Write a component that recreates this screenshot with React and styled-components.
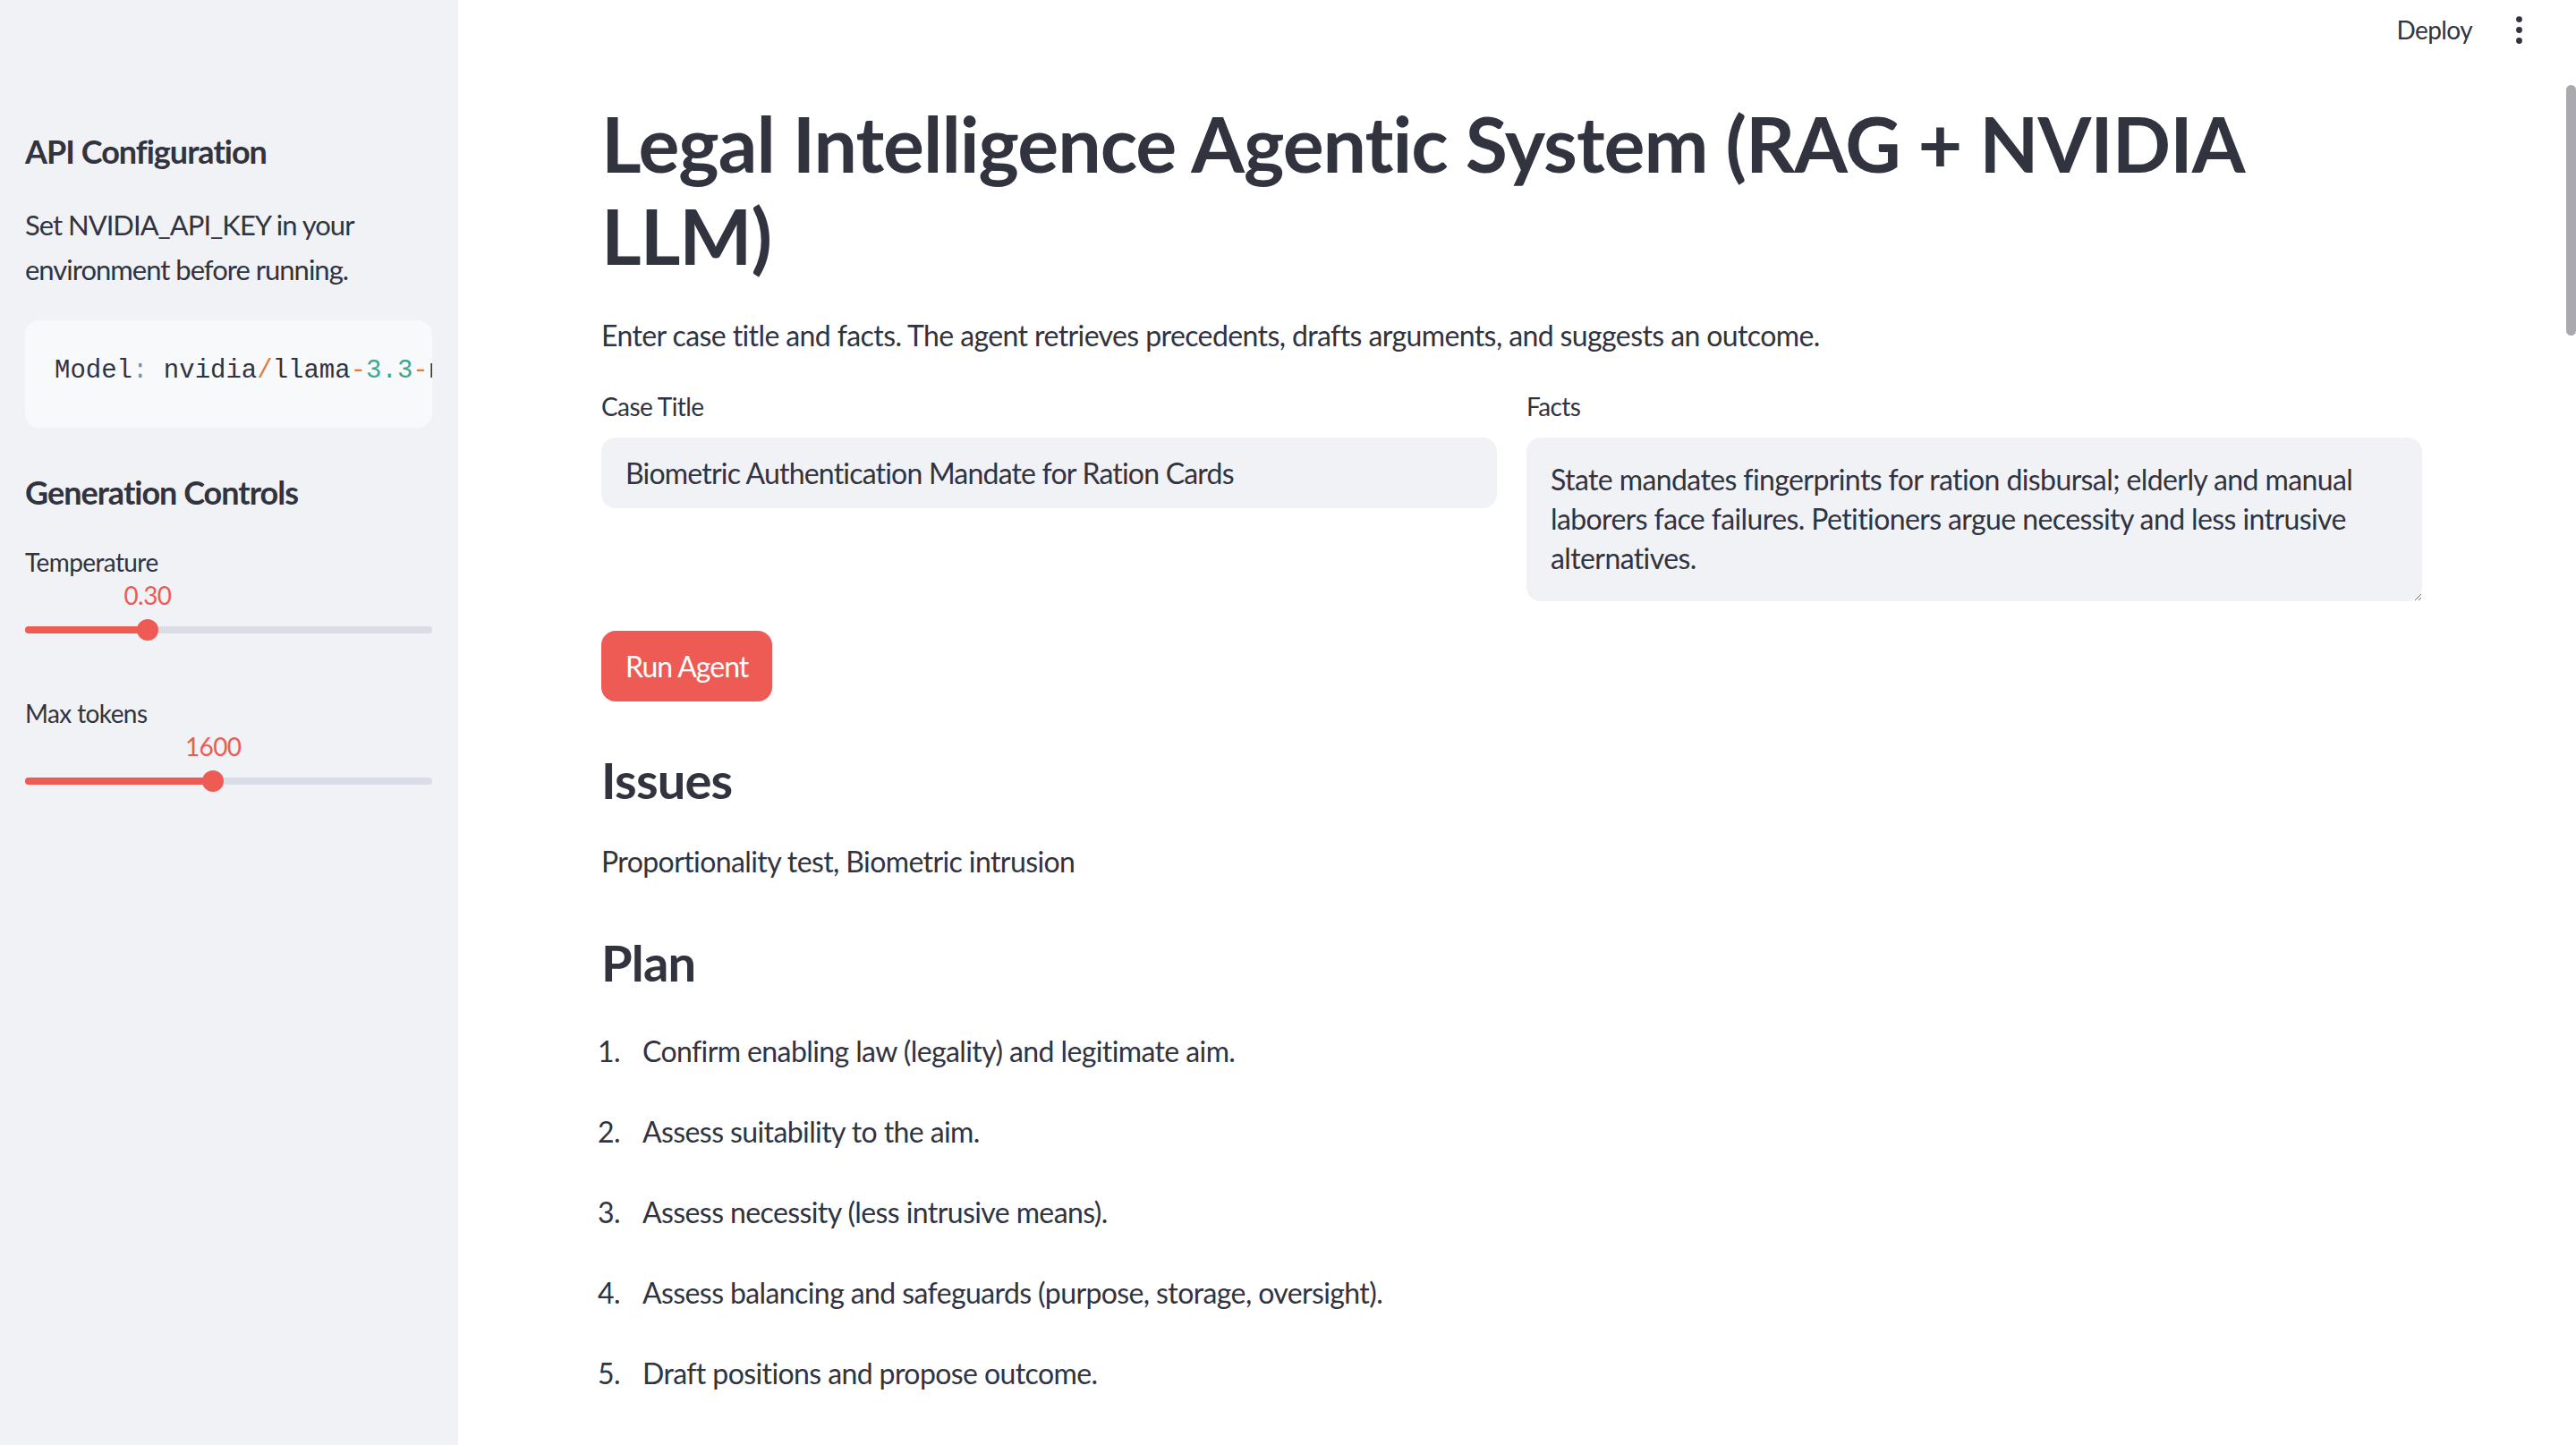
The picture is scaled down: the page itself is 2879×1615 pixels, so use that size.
import styled, { createGlobalStyle } from "styled-components";
import { EllipsisVertical } from "lucide-react";

const TEXT = "#31333f";
const RED = "#ee5b55";
const FONT = `Lato, "Noto Sans", sans-serif`;

const GlobalStyle = createGlobalStyle`
  html, body {
    margin: 0;
    padding: 0;
    height: 100%;
    overflow: hidden;
    background: #ffffff;
  }
  body {
    font-family: ${FONT};
    color: ${TEXT};
    letter-spacing: -0.6px;
  }
  * {
    box-sizing: border-box;
  }
`;

const Layout = styled.div`
  display: grid;
  grid-template-columns: 512px 1fr;
  height: 100vh;
`;

/* ---------- sidebar ---------- */

const Sidebar = styled.aside`
  background: #f0f2f6;
  padding: 145px 29px 0 28px;
  display: flex;
  flex-direction: column;
`;

const SideHeading = styled.h2`
  margin: ${(p) => p.$top || 0}px 0 0;
  font-size: 36px;
  line-height: 48px;
  font-weight: 700;
  letter-spacing: -1px;
`;

const SideText = styled.p`
  margin: 33px 0 0;
  font-size: 31px;
  line-height: 50px;
  letter-spacing: -1px;
`;

const CodeBlock = styled.pre`
  margin: 32px 0 0;
  height: 120px;
  background: #f8f9fb;
  border-radius: 16px;
  padding: 36px 0 0 33px;
  font-family: "Liberation Mono", monospace;
  font-size: 29px;
  line-height: 42px;
  letter-spacing: 0;
  white-space: pre;
  overflow: hidden;
  color: ${TEXT};
`;

const Tok = styled.span`
  color: ${(p) =>
    p.$kind === "op" ? "#e07b39" : p.$kind === "num" ? "#3fa68f" : p.$kind === "punct" ? "#8a8d96" : TEXT};
`;

const SliderLabel = styled.div`
  margin-top: ${(p) => p.$top}px;
  font-size: 28px;
  line-height: 36px;
`;

const SliderWrap = styled.div`
  position: relative;
  margin-top: 5px;
  height: 66px;
`;

const SliderValue = styled.span`
  position: absolute;
  top: 0;
  transform: translateX(-50%);
  font-size: 28px;
  line-height: 28px;
  color: ${RED};
`;

const Track = styled.div`
  position: absolute;
  left: 0;
  right: 0;
  top: 49px;
  height: 8px;
  border-radius: 4px;
  background: #dadde5;
`;

const Fill = styled.div`
  height: 100%;
  border-radius: 4px;
  background: ${RED};
`;

const Thumb = styled.div`
  position: absolute;
  top: 41px;
  width: 24px;
  height: 24px;
  margin-left: -12px;
  border-radius: 50%;
  background: ${RED};
`;

function Slider({ label, value, pct, top }) {
  return (
    <>
      <SliderLabel $top={top}>{label}</SliderLabel>
      <SliderWrap>
        <SliderValue style={{ left: `${pct}%` }}>{value}</SliderValue>
        <Track>
          <Fill style={{ width: `${pct}%` }} />
        </Track>
        <Thumb style={{ left: `${pct}%` }} />
      </SliderWrap>
    </>
  );
}

/* ---------- main ---------- */

const Main = styled.main`
  position: relative;
  overflow: hidden;
`;

const Header = styled.header`
  height: 66px;
  display: flex;
  align-items: center;
  justify-content: flex-end;
  gap: 32px;
  padding-right: 43px;
`;

const DeployLabel = styled.span`
  font-size: 28px;
  line-height: 28px;
`;

const ScrollThumb = styled.div`
  position: absolute;
  right: 0;
  top: 95px;
  width: 11px;
  height: 280px;
  border-radius: 6px;
  background: #a9a9ae;
`;

const Content = styled.div`
  padding: 0 172px 0 160px;
`;

const Title = styled.h1`
  margin: 42px 0 0;
  font-size: 86px;
  line-height: 103px;
  font-weight: 700;
  letter-spacing: -1px;
`;

const Paragraph = styled.p`
  margin: ${(p) => p.$top}px 0 0;
  font-size: 32px;
  line-height: 51px;
`;

const FieldRow = styled.div`
  display: grid;
  grid-template-columns: 1fr 1fr;
  gap: 33px;
  margin-top: 36px;
  align-items: start;
`;

const Field = styled.div`
  display: flex;
  flex-direction: column;
`;

const FieldLabel = styled.label`
  font-size: 28px;
  line-height: 36px;
  margin-bottom: 17px;
`;

const TextInput = styled.input`
  height: 79px;
  border: none;
  border-radius: 16px;
  background: #f0f2f6;
  padding: 0 27px;
  font-family: ${FONT};
  font-size: 32px;
  letter-spacing: -0.8px;
  color: ${TEXT};
  outline: none;
`;

const TextArea = styled.textarea`
  height: 183px;
  border: none;
  border-radius: 16px;
  background: #f0f2f6;
  padding: 25px 27px;
  font-family: ${FONT};
  font-size: 32px;
  line-height: 44px;
  letter-spacing: -0.6px;
  color: ${TEXT};
  outline: none;
  resize: vertical;
`;

const RunButton = styled.button`
  align-self: flex-start;
  margin-top: 33px;
  height: 79px;
  padding: 0 27px;
  border: none;
  border-radius: 16px;
  background: ${RED};
  color: #ffffff;
  font-family: ${FONT};
  font-size: 32px;
  letter-spacing: -1px;
  cursor: pointer;
`;

const SectionTitle = styled.h3`
  margin: ${(p) => p.$top}px 0 0;
  font-size: 56px;
  line-height: 67px;
  font-weight: 700;
  letter-spacing: -0.8px;
`;

const Steps = styled.ol`
  list-style: none;
  margin: 40px 0 0 -4px;
  padding: 0;
`;

const Step = styled.li`
  display: flex;
  font-size: 32px;
  line-height: 51px;
  margin-bottom: 39px;
`;

const StepNum = styled.span`
  width: 50px;
  flex: none;
`;

const steps = [
  "Confirm enabling law (legality) and legitimate aim.",
  "Assess suitability to the aim.",
  "Assess necessity (less intrusive means).",
  "Assess balancing and safeguards (purpose, storage, oversight).",
  "Draft positions and propose outcome.",
];

export default function App() {
  return (
    <>
      <GlobalStyle />
      <Layout>
        <Sidebar>
          <SideHeading>API Configuration</SideHeading>
          <SideText>
            Set NVIDIA_API_KEY in your environment before running.
          </SideText>
          <CodeBlock>
            <Tok>Model</Tok>
            <Tok $kind="punct">:</Tok> <Tok>nvidia</Tok>
            <Tok $kind="op">/</Tok>
            <Tok>llama</Tok>
            <Tok $kind="op">-</Tok>
            <Tok $kind="num">3.3</Tok>
            <Tok $kind="op">-</Tok>
            <Tok>nemotron</Tok>
            <Tok $kind="op">-</Tok>
            <Tok>super</Tok>
          </CodeBlock>
          <SideHeading $top={48}>Generation Controls</SideHeading>
          <Slider label="Temperature" value="0.30" pct={30.1} top={36} />
          <Slider label="Max tokens" value="1600" pct={46.2} top={62} />
        </Sidebar>

        <Main>
          <Header>
            <DeployLabel>Deploy</DeployLabel>
            <EllipsisVertical size={41} strokeWidth={2} color={TEXT} />
          </Header>
          <ScrollThumb />
          <Content>
            <Title>Legal Intelligence Agentic System (RAG + NVIDIA LLM)</Title>
            <Paragraph $top={35}>
              Enter case title and facts. The agent retrieves precedents, drafts
              arguments, and suggests an outcome.
            </Paragraph>
            <FieldRow>
              <Field>
                <FieldLabel>Case Title</FieldLabel>
                <TextInput
                  readOnly
                  value="Biometric Authentication Mandate for Ration Cards"
                />
              </Field>
              <Field>
                <FieldLabel>Facts</FieldLabel>
                <TextArea
                  readOnly
                  value="State mandates fingerprints for ration disbursal; elderly and manual laborers face failures. Petitioners argue necessity and less intrusive alternatives."
                />
              </Field>
            </FieldRow>
            <RunButton>Run Agent</RunButton>
            <SectionTitle $top={54}>Issues</SectionTitle>
            <Paragraph $top={32}>Proportionality test, Biometric intrusion</Paragraph>
            <SectionTitle $top={54}>Plan</SectionTitle>
            <Steps>
              {steps.map((s, i) => (
                <Step key={i}>
                  <StepNum>{i + 1}.</StepNum>
                  {s}
                </Step>
              ))}
            </Steps>
          </Content>
        </Main>
      </Layout>
    </>
  );
}
